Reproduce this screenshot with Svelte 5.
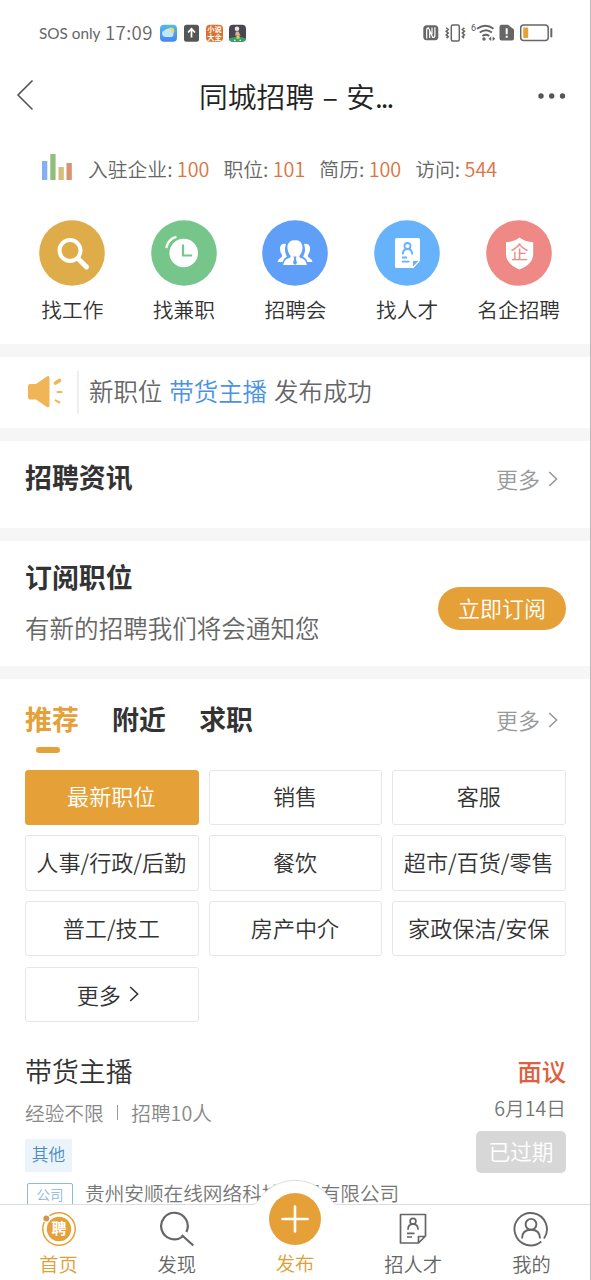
<script>
  const stats = [
    ['入驻企业', 100],
    ['职位', 101],
    ['简历', 100],
    ['访问', 544]
  ];
  const shortcuts = [
    { label: '找工作', color: '#dead49', icon: 'search' },
    { label: '找兼职', color: '#76c68b', icon: 'clock' },
    { label: '招聘会', color: '#5f9ff8', icon: 'people' },
    { label: '找人才', color: '#67b3fb', icon: 'resume' },
    { label: '名企招聘', color: '#ef8986', icon: 'shield' }
  ];
  const categories = ['最新职位', '销售', '客服', '人事/行政/后勤', '餐饮', '超市/百货/零售', '普工/技工', '房产中介', '家政保洁/安保'];
</script>

{#snippet chevron()}
  <svg class="chevron" width="10" height="16" viewBox="0 0 10 16"><path d="M1.2 1 8.6 8 1.2 15" /></svg>
{/snippet}

<div class="screen">
  <header class="status">
    <span class="carrier">SOS only</span>
    <span class="time">17:09</span>
    <svg class="apps" width="87" height="18" viewBox="0 0 87 18">
      <defs>
        <linearGradient id="sky" x1="0" y1="0" x2="0" y2="1"><stop offset="0" stop-color="#55b9e8" /><stop offset="1" stop-color="#4687f0" /></linearGradient>
      </defs>
      <rect x="0" y="0.7" width="17" height="17" rx="4" fill="url(#sky)" />
      <circle cx="11" cy="6.8" r="3.3" fill="#f3d765" />
      <path d="M5 13a3.4 3.4 0 0 1-.6-6.6A4 4 0 0 1 11.600 8 2.700 2.700 0 0 1 12 13z" fill="#bfe6fb" />
      <rect x="24" y="0.7" width="15" height="17" rx="2.500" fill="#555" />
      <path d="M31.500 13.500V5.200M28 8.500l3.500-3.700L35 8.500" fill="none" stroke="#fff" stroke-width="1.700" />
      <rect x="46" y="0.700" width="17" height="17" rx="4" fill="#dd702f" />
      <text class="tiny"><tspan x="54.500" y="8.300">小说</tspan><tspan x="54.500" y="15.700">大全</tspan></text>
      <rect x="69" y="0.700" width="17" height="17" rx="4" fill="#4a4650" />
      <path d="M69 14.500q8.500-3.500 17 0 0 3.200-4 3.200h-9q-4 0-4-3.200z" fill="#37a267" />
      <circle cx="77" cy="4.800" r="2.300" fill="#eee3df" />
      <path d="M76 7.500h2.500l2 4h-5.500z" fill="#e0b29b" />
      <path d="M76.500 11.500h3v3.200h-3z" fill="#f0ce55" />
      <path d="M74 16.300h1.500M79.500 16.300h1.500" stroke="#e9fff0" stroke-width="1.300" />
    </svg>
    <svg class="signals" width="132" height="20" viewBox="0 0 132 20">
      <rect x="0.300" y="2.300" width="15" height="15" rx="3.500" fill="#666" />
      <path d="M3.700 15.500V7Q3.700 4.800 5.500 4.800L9.700 14.500Q11.900 14.500 11.900 12.500V4.200M6.700 8v7M9 4.500v7" fill="none" stroke="#fff" stroke-width="1.200" />
      <rect x="28.300" y="2" width="8" height="16" rx="1.500" fill="none" stroke="#666" stroke-width="1.500" />
      <path d="M23.200 4.800l2 1.700-2 1.800 2 1.800-2 1.800 2 1.800-1.700 1.500M41.400 4.800l-2 1.700 2 1.800-2 1.800 2 1.800-2 1.800 1.700 1.500" fill="none" stroke="#666" stroke-width="1.600" />
      <text x="48" y="8.200" class="six">6</text>
      <path d="M54 5.800q8.700-6 16.500 0M56.700 9.600q6.300-4.600 12.200 0M59.400 13q3.500-2.500 6.800 0" fill="none" stroke="#666" stroke-width="1.900" />
      <circle cx="61" cy="16" r="1.700" fill="#666" />
      <path d="M68.200 13.500v4.500l-2.700-2.200zM69.600 13.500v4.500l2.700-2.200z" fill="#666" />
      <path d="M78.500 1.700h6.500l6 4.800V15.500a2 2 0 0 1-2 2H78.500a2 2 0 0 1-2-2V3.700a2 2 0 0 1 2-2z" fill="#666" />
      <path d="M83.700 5.200v6M83.700 12.800v2" stroke="#fff" stroke-width="2" />
      <rect x="97.700" y="2" width="27.500" height="15.500" rx="3" fill="none" stroke="#666" stroke-width="1.500" />
      <rect x="100.200" y="4.500" width="5" height="10.500" rx="1" fill="#e8a13a" />
      <path d="M128.300 5.300v9" stroke="#666" stroke-width="2" />
    </svg>
  </header>

  <div class="titlebar">
    <svg class="back" width="18" height="32" viewBox="0 0 18 32"><path d="M16.500 1.500 2 16l14.500 14.500" fill="none" stroke="#555" stroke-width="1.600" /></svg>
    <h1>同城招聘<i>–</i>安<span class="dots">...</span></h1>
    <svg width="28" height="6" viewBox="0 0 28 6" fill="#555"><circle cx="3" cy="3" r="2.700" /><circle cx="13.700" cy="3" r="2.700" /><circle cx="24.500" cy="3" r="2.700" /></svg>
  </div>

  <div class="stats">
    <svg width="30" height="26" viewBox="0 0 30 26">
      <path d="M0 7h5.300v19H0z" fill="#84b0ef" /><path d="M8.300 0h5.300v26H8.300z" fill="#8fbf79" /><path d="M16.500 13h5.300v13h-5.300z" fill="#d6bd78" /><path d="M24.500 9h5.300v17h-5.300z" fill="#d79370" />
    </svg>
    {#each stats as [name, value]}
      <span class="stat">{name}: <b>{value}</b></span>
    {/each}
  </div>

  <nav class="shortcuts">
    {#each shortcuts as s}
      <div class="shortcut">
        <svg width="66" height="66" viewBox="0 0 66 66">
          <circle cx="33" cy="33" r="32.800" fill={s.color} />
          {#if s.icon === 'search'}
            <circle cx="31" cy="30.500" r="10.500" fill="none" stroke="#fff" stroke-width="4" />
            <path d="M39 38.500l8.500 8.500" stroke="#fff" stroke-width="5" stroke-linecap="round" />
          {:else if s.icon === 'clock'}
            <circle cx="32.700" cy="33" r="14.300" fill="#fff" />
            <path d="M32 24.500V35.500h9" fill="none" stroke={s.color} stroke-width="2.200" />
            <path d="M15.500 27Q17.500 19.500 24.500 17.200" fill="none" stroke="#fff" stroke-width="2.400" stroke-linecap="round" />
          {:else if s.icon === 'people'}
            <g fill="#fff">
              <path d="M24 24q-5-1.500-6 3.500-.5 4 2 7.500.5 2-1.500 3-2.700 1.500-3 4h5q1-3.500 4.500-5.500-3.500-5-1-12.500zM42 24q5-1.500 6 3.500.5 4-2 7.500-.5 2 1.500 3 2.700 1.500 3 4h-5q-1-3.500-4.500-5.500 3.500-5 1-12.500z" />
              <path d="M33 20c-5 0-8 3.500-7.500 8.500.3 3 1.500 5.500 3 7.200.7 2-1 2.300-3.200 3-2.500 1.200-3.700 3.300-4 6.300h23.400c-.3-3-1.500-5.100-4-6.300-2.200-.7-3.900-1-3.200-3 1.500-1.700 2.700-4.200 3-7.200.5-5-2.500-8.500-7.500-8.500z" />
            </g>
            <path d="M31.500 36.500h3l-.7 2.200 1.200 4.300-2 2-2-2 1.200-4.300z" fill={s.color} />
          {:else if s.icon === 'resume'}
            <path d="M22.500 18h22a1.500 1.500 0 0 1 1.500 1.500V41l-6.500 7h-17a1.500 1.500 0 0 1-1.500-1.500v-27a1.500 1.500 0 0 1 1.500-1.500z" fill="#fff" />
            <g fill="none" stroke={s.color} stroke-width="1.800">
              <circle cx="33.500" cy="26" r="3" />
              <path d="M28.800 34.500q0-5.500 4.700-5.500t4.700 5.500M28 37.500h5M28 41.700h7.500" />
            </g>
            <path d="M39 41h5.500L39 46.500z" fill={s.color} />
          {:else}
            <path d="M33.500 17.500q6 4.500 13.700 4.700V34q0 10-13.700 15.500Q20 44 20 34V22.200q8-.2 13.500-4.700z" fill="#fff" />
            <text x="33.500" y="39" class="qi">企</text>
          {/if}
        </svg>
        <span>{s.label}</span>
      </div>
    {/each}
  </nav>

  <section class="band notice">
    <svg width="37" height="34" viewBox="0 0 37 34">
      <path d="M3 9h6L19.500 1.700q3-1.700 3 1.500v27q0 3.200-3 1.500L9 24.500H3a2 2 0 0 1-2-2V11a2 2 0 0 1 2-2z" fill="#f0b557" />
      <g stroke="#f0b557" stroke-linecap="round"><path d="M28.500 8l4-2.500" stroke-width="3.700" /><path d="M30.500 17h4M28.500 25.300l4 2.200" stroke-width="2" /></g>
    </svg>
    <p>新职位<a>带货主播</a>发布成功</p>
  </section>

  <section class="band news">
    <h2>招聘资讯</h2>
    <span class="more"><span>更多</span>{@render chevron()}</span>
  </section>

  <section class="band subscribe">
    <div>
      <h2>订阅职位</h2>
      <p>有新的招聘我们将会通知您</p>
    </div>
    <button>立即订阅</button>
  </section>

  <section class="band list">
    <div class="tabs">
      <h2 class="active">推荐</h2>
      <h2>附近</h2>
      <h2>求职</h2>
      <span class="more"><span>更多</span>{@render chevron()}</span>
    </div>
    <div class="grid">
      {#each categories as c, i}
        <div class="cell" class:selected={i === 0}>{c}</div>
      {/each}
      <div class="cell all">更多{@render chevron()}</div>
    </div>
    <article>
      <div class="info">
        <h3>带货主播</h3>
        <p class="req">经验不限<i></i>招聘10人</p>
        <span class="tag">其他</span>
        <p class="company"><em>公司</em>贵州安顺在线网络科技发展有限公司</p>
      </div>
      <div class="side">
        <strong>面议</strong>
        <time>6月14日</time>
        <span class="expired">已过期</span>
      </div>
    </article>
  </section>

  <footer>
    <svg class="bump" width="90" height="27" viewBox="0 0 90 27"><path d="M0 25.500H3Q6 25.500 8 22A43.500 43.500 0 0 1 82 22Q84 25.500 87 25.500H90V27H0z" fill="#fff" /><path d="M0 25.500H3Q6 25.500 8 22A43.500 43.500 0 0 1 82 22Q84 25.500 87 25.500H90" fill="none" stroke="#dcdee2" /></svg>
    <div class="tab on">
      <svg width="36" height="36" viewBox="0 0 36 36">
        <circle cx="18" cy="18" r="16.200" fill="none" stroke="#e5a137" stroke-width="1.500" />
        <circle cx="18" cy="18" r="12.200" fill="#e5a137" />
        <circle cx="5.300" cy="7.500" r="4" fill="#fff" /><circle cx="5.300" cy="7.500" r="2.900" fill="#dc9144" />
        <text x="18" y="23.300" class="pin">聘</text>
      </svg>
      <span>首页</span>
    </div>
    <div class="tab">
      <svg width="36" height="36" viewBox="0 0 36 36" fill="none" stroke="#666" stroke-width="2.200"><path d="M23.700 25.500A13.300 13.300 0 1 1 27.350 21M22.700 24 34.300 34.500" /></svg>
      <span>发现</span>
    </div>
    <div class="tab on publish">
      <svg width="52" height="52" viewBox="0 0 52 52"><circle cx="26" cy="26" r="26" fill="#e5a137" /><path d="M26 13.500v25M13.500 26h25" stroke="#fff" stroke-width="2.600" stroke-linecap="round" /></svg>
      <span>发布</span>
    </div>
    <div class="tab">
      <svg width="36" height="36" viewBox="0 0 36 36" fill="none" stroke="#666" stroke-width="1.700"><path d="M5.500 3.500h25V25l-7 7h-18zM23.500 32v-6.500h7" stroke-linejoin="round" /><circle cx="18" cy="10.300" r="2.900" /><path d="M13 18.700q0-5.500 5-5.500t5 5.500M12 22.300h7.500M12 26h5" /></svg>
      <span>招人才</span>
    </div>
    <div class="tab">
      <svg width="36" height="36" viewBox="0 0 36 36" fill="none" stroke="#666" stroke-width="1.900"><path d="M28.300 30.500A16.200 16.200 0 1 1 31 27.500" /><circle cx="18" cy="13.300" r="5.400" /><path d="M9 27.500q0-8.800 9-8.800t9 8.800" /></svg>
      <span>我的</span>
    </div>
  </footer>
</div>

<style>
  :global(body) { background: #fff; }
  .screen {
    position: relative; box-sizing: border-box; width: 591px; height: 1280px; overflow: hidden;
    border-right: 1px solid #bbb; background: #fff; color: #333;
    font-family: "Noto Sans CJK SC", sans-serif; font-weight: 350;
  }
  h1, h2, h3, p { margin: 0; }
  i, em, a { font-style: normal; }
  svg { display: block; flex: none; }
  .status { display: flex; align-items: center; height: 66px; padding-left: 39px; color: #666; }
  .carrier { width: 66px; font: 400 15.300px/20px Lato, sans-serif; white-space: nowrap; }
  .time { width: 54px; font-size: 18.600px; line-height: 18px; letter-spacing: .4px; padding-bottom: 2px; }
  .apps { margin-left: 1px; }
  .signals { margin-left: 176px; }
  .tiny { font-size: 7.200px; font-weight: 700; fill: #fff; text-anchor: middle; }
  .six { font: 9px Roboto, sans-serif; fill: #555; }
  .titlebar { display: flex; align-items: center; height: 60px; padding: 0 24px 0 16px; }
  .back { margin-top: -2px; }
  h1 { flex: 1; padding-left: 165px; font-size: 28.800px; line-height: 60px; font-weight: 350; color: #222; white-space: nowrap; }
  h1 i { display: inline-block; width: 32px; text-align: center; }
  .dots { letter-spacing: -2px; }
  .stats { display: flex; align-items: center; height: 84px; padding-left: 42px; font-size: 19.800px; color: #666; white-space: nowrap; }
  .stats svg { margin: -3px 16px 0 0; }
  .stat { margin-right: 14px; }
  .stat b { font-weight: 350; color: #dc7340; }
  .shortcuts { display: flex; height: 134px; padding: 10px 15.500px 0 16.500px; box-sizing: border-box; }
  .shortcut { flex: 1; display: flex; flex-direction: column; align-items: center; }
  .shortcut span { font-size: 20.700px; line-height: 30px; margin-top: 8px; }
  .qi { font-size: 18px; font-weight: 400; fill: #ef8986; text-anchor: middle; }
  .band { box-sizing: border-box; border-top: 13px solid #f6f6f6; }
  .notice { display: flex; align-items: center; height: 84px; padding-left: 27px; }
  .notice svg { margin-top: -2px; }
  .notice p { margin-left: 13px; padding-left: 10px; border-left: 2px solid #eee; font-size: 24.450px; line-height: 40px; padding-bottom: 3px; color: #666; }
  .notice a { color: #4a93e0; margin: 0 7px; }
  h2 { font-size: 26.900px; line-height: 40px; font-weight: 700; }
  .news { display: flex; justify-content: space-between; height: 100px; padding: 16px 32px 0 25px; }
  .more { display: flex; align-items: center; height: 43px; font-size: 22px; line-height: 30px; color: #999; }
  .more span { margin-top: -2px; }
  .chevron { margin-left: 8px; }
  .chevron path { fill: none; stroke: currentColor; stroke-width: 1.600; }
  .subscribe { display: flex; justify-content: space-between; height: 138px; padding: 16px 24px 0 25px; }
  .subscribe p { margin-top: 13px; font-size: 24.550px; line-height: 36px; color: #666; }
  button { width: 128px; height: 43px; margin-top: 30px; padding: 0 0 4px; border: 0; border-radius: 22px; background: #e5a137; color: #fff; font: 350 22px/38px "Noto Sans CJK SC", sans-serif; }
  .list { padding: 20px 24px 0 25px; }
  .tabs { display: flex; gap: 33.300px; height: 70.500px; padding-right: 8px; }
  .tabs .more { margin: -1px 0 0 auto; }
  .active { color: #e5a137; }
  .active::after { content: ""; display: block; width: 24px; height: 6px; margin: 8px 0 0 11px; border-radius: 3px; background: #e5a137; }
  .grid { display: grid; grid-template-columns: repeat(3, 1fr); grid-auto-rows: 55.500px; gap: 10.200px; }
  .cell { display: flex; align-items: center; justify-content: center; box-sizing: border-box; padding: 0 1px 4px 0; border: 1px solid #e6e6e6; border-radius: 3px; font-size: 22.100px; white-space: nowrap; }
  .selected { background: #e5a137; border-color: #e5a137; color: #fff; }
  .all { padding: 0 8px 0 0; }
  .all .chevron { margin: -1px 0 0 8px; }
  article { display: flex; justify-content: space-between; padding-top: 28.500px; }
  h3 { font-size: 26.900px; line-height: 40px; font-weight: 350; }
  .req { display: flex; align-items: center; margin-top: 7px; font-size: 19.700px; line-height: 30px; color: #888; }
  .req i { width: 1.500px; height: 15px; margin: 0 13px; background: #999; }
  .tag { display: block; width: 47px; height: 33px; margin-top: 11px; background: #ecf4fb; color: #4c8cc4; font-size: 16.700px; line-height: 30px; text-align: center; }
  .company { display: flex; margin-top: 6px; font-size: 19.650px; line-height: 30px; color: #777; white-space: nowrap; }
  .company em { box-sizing: border-box; width: 46px; height: 26px; margin: 5px 12px 0 2px; border: 1px solid #8db9de; border-radius: 2px; color: #8db4d6; font-size: 13.500px; line-height: 21px; text-align: center; }
  .side { display: flex; flex-direction: column; align-items: flex-end; }
  strong { font-size: 24.300px; line-height: 40px; font-weight: 500; color: #de6040; }
  time { margin-top: 2px; font-size: 19.700px; line-height: 30px; color: #777; }
  .expired { width: 90px; height: 42px; margin-top: 8px; border-radius: 5px; background: #d7d7d7; color: #fff; font-size: 21.700px; line-height: 39px; text-align: center; }
  footer { position: absolute; left: 0; bottom: 0; display: flex; box-sizing: border-box; width: 591px; height: 76px; border-top: 1px solid #dcdee2; background: #fff; }
  .bump { position: absolute; left: 250px; top: -26px; }
  .tab { position: relative; flex: 1; display: flex; flex-direction: column; align-items: center; padding: 6px 1px 0 0; font-size: 19.300px; line-height: 28px; color: #666; }
  .tab span { margin-top: 3px; }
  .on { color: #dca137; }
  .publish { margin-top: -18px; }
  .publish span { margin-top: 4px; }
  .pin { font-size: 15px; font-weight: 700; fill: #fff; text-anchor: middle; }
</style>
